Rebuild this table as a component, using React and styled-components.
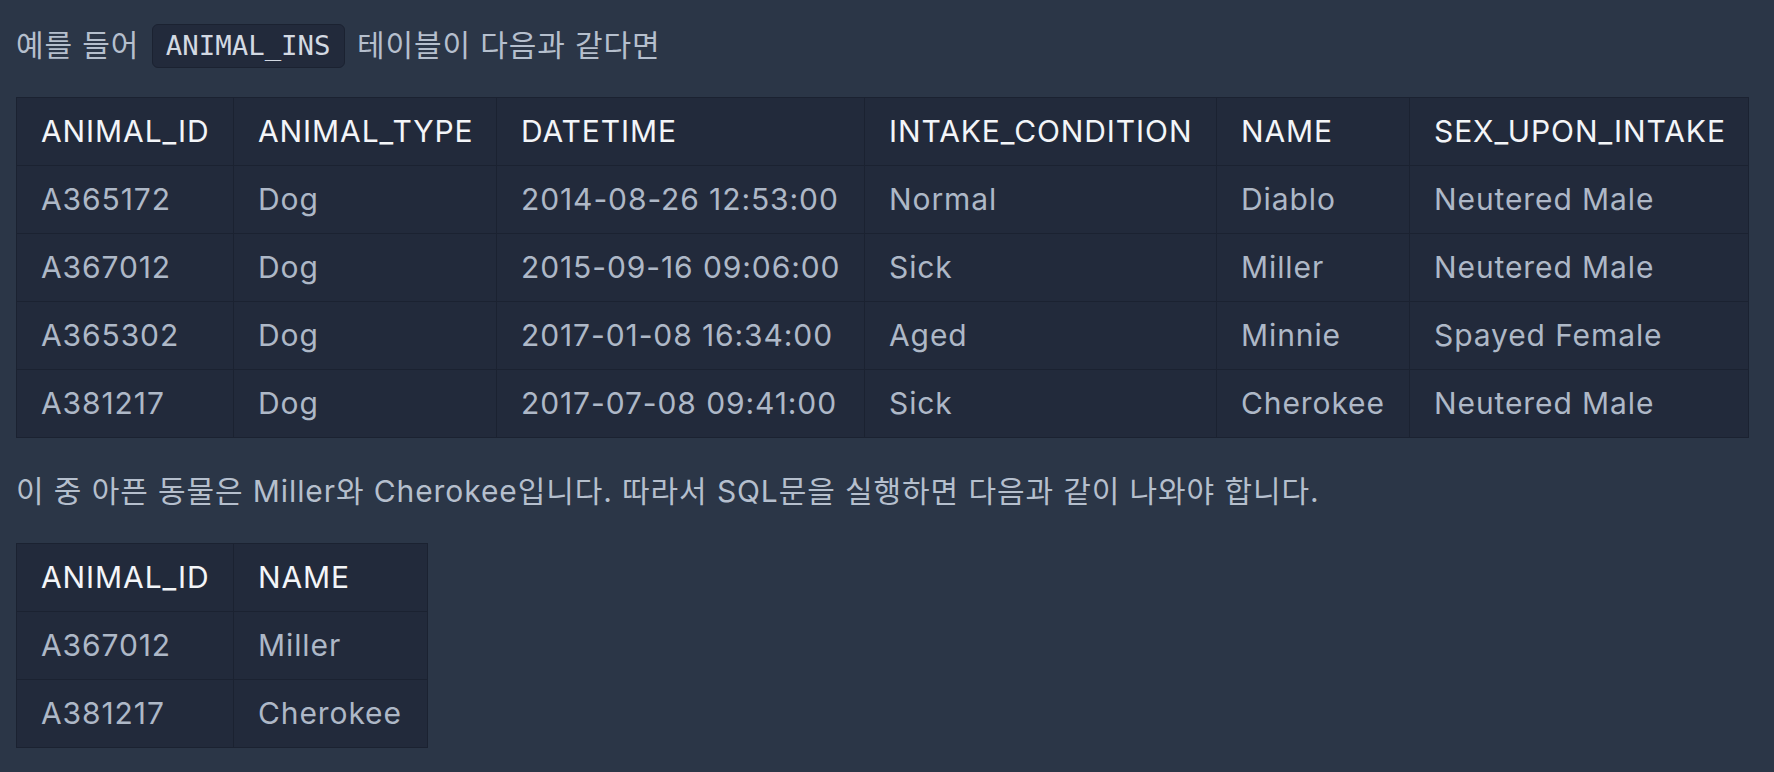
import React from "react";
import styled, { createGlobalStyle } from "styled-components";

const GlobalStyle = createGlobalStyle`
  html, body {
    margin: 0;
    padding: 0;
    background: #2b3647;
  }
  body {
    font-family: Inter, "Noto Sans CJK KR", sans-serif;
    -webkit-font-smoothing: antialiased;
  }
`;

const animals = [
  ["A365172", "Dog", "2014-08-26 12:53:00", "Normal", "Diablo", "Neutered Male"],
  ["A367012", "Dog", "2015-09-16 09:06:00", "Sick", "Miller", "Neutered Male"],
  ["A365302", "Dog", "2017-01-08 16:34:00", "Aged", "Minnie", "Spayed Female"],
  ["A381217", "Dog", "2017-07-08 09:41:00", "Sick", "Cherokee", "Neutered Male"],
];

const sickOnes = [
  ["A367012", "Miller"],
  ["A381217", "Cherokee"],
];

const mainCols = [217, 263, 368, 352, 193, 339];
const resultCols = [217, 194];
const sum = (arr) => arr.reduce((a, b) => a + b, 0);

export default function App() {
  return (
    <>
      <GlobalStyle />
      <Page>
        <Paragraph>
          예를 들어 <Code>ANIMAL_INS</Code> 테이블이 다음과 같다면
        </Paragraph>

        <DataTable $width={sum(mainCols)}>
          <colgroup>
            {mainCols.map((w, i) => (
              <Col key={i} $w={w} />
            ))}
          </colgroup>
          <thead>
            <tr>
              <Th>ANIMAL_ID</Th>
              <Th>ANIMAL_TYPE</Th>
              <Th>DATETIME</Th>
              <Th>INTAKE_CONDITION</Th>
              <Th>NAME</Th>
              <Th>SEX_UPON_INTAKE</Th>
            </tr>
          </thead>
          <tbody>
            {animals.map((row) => (
              <tr key={row[0]}>
                {row.map((cell, i) => (
                  <Td key={i}>{cell}</Td>
                ))}
              </tr>
            ))}
          </tbody>
        </DataTable>

        <Paragraph>
          이 중 아픈 동물은 Miller와 Cherokee입니다. 따라서 SQL문을 실행하면 다음과 같이 나와야 합니다.
        </Paragraph>

        <DataTable $width={sum(resultCols)}>
          <colgroup>
            {resultCols.map((w, i) => (
              <Col key={i} $w={w} />
            ))}
          </colgroup>
          <thead>
            <tr>
              <Th>ANIMAL_ID</Th>
              <Th>NAME</Th>
            </tr>
          </thead>
          <tbody>
            {sickOnes.map((row) => (
              <tr key={row[0]}>
                <Td>{row[0]}</Td>
                <Td>{row[1]}</Td>
              </tr>
            ))}
          </tbody>
        </DataTable>
      </Page>
    </>
  );
}

const Page = styled.div`
  padding: 21px 16px 0;
  color: #b5bfcd;
  font-size: 30px;
  letter-spacing: 0.9px;
`;

const Paragraph = styled.p`
  margin: 0 0 28px;
  line-height: 48px;
  color: #b5bfcd;

  & + table {
    margin-bottom: 29px;
  }
`;

const Code = styled.code`
  display: inline-block;
  font-family: "DejaVu Sans Mono", "Liberation Mono", monospace;
  font-size: 27.4px;
  letter-spacing: 0;
  line-height: 42px;
  padding: 0 13px;
  margin: 0 3px;
  background: #222a3b;
  border: 1px solid #1b2231;
  border-radius: 6px;
  color: #d3d9e2;
  vertical-align: 1px;
`;

const DataTable = styled.table`
  width: ${({ $width }) => $width}px;
  border-collapse: collapse;
  table-layout: fixed;
  background: #222a3b;
  border: 1px solid #1b2231;
`;

const Col = styled.col`
  width: ${({ $w }) => $w}px;
`;

const Th = styled.th`
  padding: 12px 22px 12px 24px;
  line-height: 43px;
  text-align: left;
  font-weight: 400;
  color: #f3f5f8;
  border: 1px solid #1b2231;
  white-space: nowrap;
`;

const Td = styled.td`
  padding: 12px 22px 12px 24px;
  line-height: 43px;
  color: #aeb8c7;
  border: 1px solid #1b2231;
  white-space: nowrap;
`;
